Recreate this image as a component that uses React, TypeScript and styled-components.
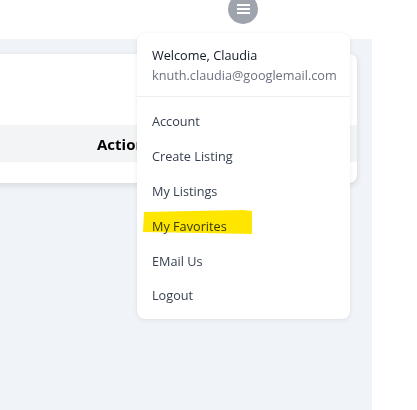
import styled, {createGlobalStyle} from "styled-components";

const GlobalStyle = createGlobalStyle`
  html, body {
    margin: 0;
    padding: 0;
    background: #fff;
    font-family: "Open Sans", "Noto Sans", sans-serif;
    overflow: hidden;
  }
`

const Page = styled.div`
  position: relative;
  width: 417px;
  height: 410px;
  display: flex;
  flex-direction: column;
  overflow: hidden;
`

const TopBar = styled.header`
  height: 39px;
  flex: none;
  display: flex;
  align-items: flex-start;
  background: #fff;
`

const AvatarButton = styled.button`
  width: 30px;
  height: 30px;
  margin: -6px 0 0 228px;
  padding: 0;
  border: none;
  border-radius: 50%;
  background: #9fa3ad;
  display: flex;
  align-items: center;
  justify-content: center;
  color: #fff;
`

const Main = styled.main`
  flex: 1;
  width: 372px;
  background: #f0f3f8;
  padding-top: 15px;
  box-sizing: border-box;
`

const Card = styled.section`
  margin: 0 15px 0 -12px;
  background: #fff;
  border-radius: 8px;
  box-shadow: 0 2px 6px rgba(0, 0, 0, .12);
  overflow: hidden;
`

const CardTop = styled.div`
  height: 71px;
`

const TableHead = styled.div`
  height: 37px;
  display: flex;
  align-items: center;
  background: #f3f4f6;
  padding-left: 109px;
  font-weight: 700;
  font-size: 15px;
  color: #000;
`

const TableRow = styled.div`
  height: 21px;
`

const Menu = styled.nav`
  position: absolute;
  top: 33px;
  left: 137px;
  width: 213px;
  background: #fff;
  border-radius: 8px;
  box-shadow: 0 1px 5px rgba(0, 0, 0, .08), 0 0 1px rgba(0, 0, 0, .06);
`

const MenuHeader = styled.div`
  padding: 12px 15px 11px;
  border-bottom: 1px solid #eceef1;
  font-size: 12.7px;
  line-height: 20px;

  .name {
    color: #111827;
  }

  .email {
    color: #6b7280;
  }
`

const MenuList = styled.ul`
  list-style: none;
  margin: 0;
  padding: 7px 0 6px;
`

const MenuItem = styled.li`
  position: relative;
  height: 34.8px;
  display: flex;
  align-items: center;
  padding-left: 15px;
  font-size: 12.7px;
  color: #374151;
`

// highlighter stroke laid over a menu entry
const Marker = styled.svg`
  position: absolute;
  left: 6px;
  top: 1px;
  mix-blend-mode: multiply;
  pointer-events: none;
`

const items = ['Account', 'Create Listing', 'My Listings', 'My Favorites', 'EMail Us', 'Logout'];

const App = () => {
    return (
        <Page>
            <GlobalStyle/>
            <TopBar>
                <AvatarButton aria-label="menu">
                    <svg width="13" height="10" viewBox="0 0 13 10">
                        <rect x="0" y="0" width="13" height="2" fill="#fff"/>
                        <rect x="0" y="4" width="13" height="2" fill="#fff"/>
                        <rect x="0" y="8" width="13" height="2" fill="#fff"/>
                    </svg>
                </AvatarButton>
            </TopBar>
            <Main>
                <Card>
                    <CardTop/>
                    <TableHead>Actions</TableHead>
                    <TableRow/>
                </Card>
            </Main>
            <Menu>
                <MenuHeader>
                    <div className="name">Welcome, Claudia</div>
                    <div className="email">knuth.claudia@googlemail.com</div>
                </MenuHeader>
                <MenuList>
                    {items.map(item => (
                        <MenuItem key={item}>
                            {item === 'My Favorites' && (
                                <Marker width="110" height="26" viewBox="0 0 110 26">
                                    <polygon points="1,3 100,1 109,2 109,25 60,24 0,23" fill="#ffe600"/>
                                </Marker>
                            )}
                            <span>{item}</span>
                        </MenuItem>
                    ))}
                </MenuList>
            </Menu>
        </Page>
    )
}

export default App
